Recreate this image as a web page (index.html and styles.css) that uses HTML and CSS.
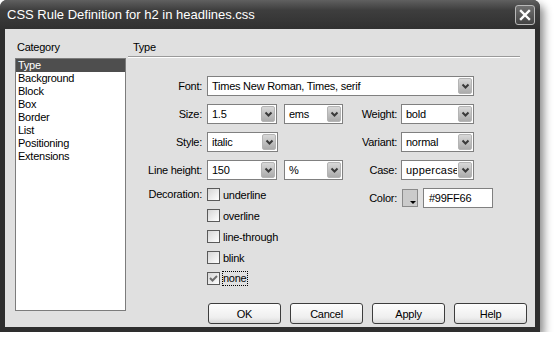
FILE: index.html
```html
<!DOCTYPE html>
<html lang="en">
<head>
  <meta charset="UTF-8" />
  <title>CSS Rule Definition for h2 in headlines.css</title>
  <link rel="stylesheet" href="styles.css">
</head>
<body>
  <div class="window">
    <div class="titlebar">
      <span class="title">CSS Rule Definition for h2 in headlines.css</span>
      <span class="close">
        <svg width="12" height="12" viewBox="0 0 12 12"><path d="M2 2L10 10M10 2L2 10" stroke="#fff" stroke-width="2.4" stroke-linecap="square"/></svg>
      </span>
    </div>
    <div class="client">
      <div class="side">
        <div class="caption">Category</div>
        <ul class="list">
          <li class="selected">Type</li>
          <li>Background</li>
          <li>Block</li>
          <li>Box</li>
          <li>Border</li>
          <li>List</li>
          <li>Positioning</li>
          <li>Extensions</li>
        </ul>
      </div>
      <div class="main">
        <div class="heading">Type</div>
        <div class="form">
          <span class="lbl">Font:</span>
          <div class="combo font"><span class="val">Times New Roman, Times, serif</span><span class="arrow"><svg width="9" height="7" viewBox="0 0 9 7"><path d="M1.5 1.5L4.5 4.5L7.5 1.5" fill="none" stroke="#3a3a3a" stroke-width="2"/></svg></span></div>

          <span class="lbl">Size:</span>
          <div class="combo w70"><span class="val">1.5</span><span class="arrow"><svg width="9" height="7" viewBox="0 0 9 7"><path d="M1.5 1.5L4.5 4.5L7.5 1.5" fill="none" stroke="#3a3a3a" stroke-width="2"/></svg></span></div>
          <div class="combo w59"><span class="val">ems</span><span class="arrow"><svg width="9" height="7" viewBox="0 0 9 7"><path d="M1.5 1.5L4.5 4.5L7.5 1.5" fill="none" stroke="#3a3a3a" stroke-width="2"/></svg></span></div>
          <span class="lbl lbl-right">Weight:</span>
          <div class="combo w73"><span class="val">bold</span><span class="arrow"><svg width="9" height="7" viewBox="0 0 9 7"><path d="M1.5 1.5L4.5 4.5L7.5 1.5" fill="none" stroke="#3a3a3a" stroke-width="2"/></svg></span></div>

          <span class="lbl">Style:</span>
          <div class="combo w71"><span class="val">italic</span><span class="arrow"><svg width="9" height="7" viewBox="0 0 9 7"><path d="M1.5 1.5L4.5 4.5L7.5 1.5" fill="none" stroke="#3a3a3a" stroke-width="2"/></svg></span></div>
          <span class="lbl lbl-right">Variant:</span>
          <div class="combo w73"><span class="val">normal</span><span class="arrow"><svg width="9" height="7" viewBox="0 0 9 7"><path d="M1.5 1.5L4.5 4.5L7.5 1.5" fill="none" stroke="#3a3a3a" stroke-width="2"/></svg></span></div>

          <span class="lbl">Line height:</span>
          <div class="combo w70"><span class="val">150</span><span class="arrow"><svg width="9" height="7" viewBox="0 0 9 7"><path d="M1.5 1.5L4.5 4.5L7.5 1.5" fill="none" stroke="#3a3a3a" stroke-width="2"/></svg></span></div>
          <div class="combo w59"><span class="val">%</span><span class="arrow"><svg width="9" height="7" viewBox="0 0 9 7"><path d="M1.5 1.5L4.5 4.5L7.5 1.5" fill="none" stroke="#3a3a3a" stroke-width="2"/></svg></span></div>
          <span class="lbl lbl-right">Case:</span>
          <div class="combo w73"><span class="val clip">uppercase</span><span class="arrow"><svg width="9" height="7" viewBox="0 0 9 7"><path d="M1.5 1.5L4.5 4.5L7.5 1.5" fill="none" stroke="#3a3a3a" stroke-width="2"/></svg></span></div>

          <span class="lbl top">Decoration:</span>
          <div class="checks">
            <div class="check"><span class="box"></span>underline</div>
            <div class="check"><span class="box"></span>overline</div>
            <div class="check"><span class="box"></span>line-through</div>
            <div class="check"><span class="box"></span>blink</div>
            <div class="check"><span class="box"><svg width="11" height="11" viewBox="0 0 11 11"><path d="M2 5L4.5 7.5L9 3" fill="none" stroke="#6e6e6e" stroke-width="2"/></svg></span><span class="focus">none</span></div>
          </div>
          <span class="lbl lbl-right color-lbl">Color:</span>
          <div class="color">
            <span class="swatch"><span class="tri"></span></span>
            <span class="field">#99FF66</span>
          </div>
        </div>
        <div class="buttons">
          <div class="btn">OK</div>
          <div class="btn">Cancel</div>
          <div class="btn">Apply</div>
          <div class="btn">Help</div>
        </div>
      </div>
    </div>
  </div>
</body>
</html>
```

FILE: styles.css
```css
body {
  margin: 0;
  background: #fff;
  font-family: "Liberation Sans", Arial, sans-serif;
  font-size: 11px;
  letter-spacing: -0.25px;
  color: #000;
}
.window {
  width: 540px;
  height: 332px;
  box-sizing: border-box;
  padding: 0 5px 5px 5px;
  background: #2e2e2e;
  border-radius: 7px 7px 0 0;
  display: flex;
  flex-direction: column;
  box-shadow: 4px 5px 9px rgba(0, 0, 0, 0.45);
}
.titlebar {
  height: 29px;
  margin: 0 -5px;
  padding: 0 5px 0 7px;
  display: flex;
  align-items: center;
  justify-content: space-between;
  background: linear-gradient(#606060, #3e3e3e 35%, #303030);
  border-radius: 7px 7px 0 0;
}
.title {
  color: #fff;
  font-size: 13px;
  letter-spacing: 0;
}
.close {
  width: 20px;
  height: 20px;
  box-sizing: border-box;
  border: 1px solid #b8b8b8;
  border-radius: 3px;
  background: linear-gradient(#707070, #444);
  display: flex;
  align-items: center;
  justify-content: center;
}
.client {
  flex: 1;
  background: #e0e0e0;
  display: flex;
  padding-top: 12px;
}
.side {
  width: 111px;
  margin-left: 10px;
}
.caption {
  line-height: 13px;
  padding-left: 2px;
  margin-bottom: 4px;
}
.list {
  margin: 0;
  padding: 0;
  list-style: none;
  height: 253px;
  box-sizing: border-box;
  border: 1px solid #7c7c7c;
  background: #fff;
}
.list li {
  line-height: 13px;
  padding-left: 2px;
}
.list li.selected {
  background: #4e4e4e;
  color: #fff;
}
.main {
  flex: 1;
  margin-left: 2px;
  display: flex;
  flex-direction: column;
}
.heading {
  line-height: 13px;
  padding: 0 0 2px 5px;
  margin-right: 15px;
  border-bottom: 1px solid #9a9a9a;
  box-shadow: 0 1px 0 #fff;
}
.form {
  margin-top: 19px;
  display: grid;
  grid-template-columns: 79px 77px 59px 58px 1fr;
  row-gap: 8px;
  align-items: center;
}
.lbl {
  grid-column: 1;
  text-align: right;
  padding-right: 5px;
  white-space: nowrap;
}
.lbl-right {
  grid-column: 4;
  padding-right: 4px;
}
.top {
  align-self: start;
  line-height: 13px;
}
.color-lbl {
  align-self: start;
  line-height: 20px;
}
.combo {
  height: 20px;
  box-sizing: border-box;
  border: 1px solid #808080;
  background: #fff;
  display: flex;
}
.combo .val {
  flex: 1;
  overflow: hidden;
  white-space: nowrap;
  line-height: 18px;
  padding-left: 4px;
}
.combo .clip {
  letter-spacing: 0.2px;
}
.combo .arrow {
  width: 14px;
  margin: 1px;
  box-sizing: border-box;
  border: 1px solid #b4b4b4;
  border-radius: 2px;
  background: linear-gradient(#d8d8d8, #ababab);
  display: flex;
  align-items: center;
  justify-content: center;
}
.font {
  grid-column: 2 / 6;
  width: 267px;
}
.w70 { width: 70px; }
.w71 { width: 71px; }
.w59 { width: 59px; }
.w73 { width: 73px; }
.checks {
  grid-column: 2 / 4;
  align-self: start;
  display: flex;
  flex-direction: column;
  gap: 8px;
}
.check {
  height: 13px;
  display: flex;
  align-items: center;
  gap: 3px;
}
.box {
  width: 13px;
  height: 13px;
  box-sizing: border-box;
  border: 1px solid #5a5a5a;
  background: linear-gradient(135deg, #d6d6d6, #fff);
  display: flex;
  align-items: center;
  justify-content: center;
}
.focus {
  outline: 1px dotted #000;
  line-height: 13px;
  padding-right: 1px;
}
.color {
  align-self: start;
  display: flex;
  align-items: center;
  gap: 5px;
}
.swatch {
  width: 16px;
  height: 18px;
  margin-left: 1px;
  box-sizing: border-box;
  border: 1px solid #8a8a8a;
  background: #cbcbcb;
  display: flex;
  align-items: flex-end;
  justify-content: flex-end;
}
.tri {
  width: 0;
  height: 0;
  margin: 0 1px 2px 0;
  border-left: 3px solid transparent;
  border-right: 3px solid transparent;
  border-top: 3px solid #000;
}
.field {
  width: 70px;
  height: 20px;
  box-sizing: border-box;
  border: 1px solid #808080;
  background: #fff;
  line-height: 18px;
  padding-left: 5px;
}
.buttons {
  margin-top: auto;
  margin-right: 8px;
  margin-bottom: 3px;
  display: flex;
  justify-content: flex-end;
  gap: 9px;
}
.btn {
  width: 73px;
  height: 21px;
  box-sizing: border-box;
  border: 1px solid #3d3d3d;
  border-radius: 3px;
  background: linear-gradient(#fdfdfd, #efefef 70%, #d9d9d9);
  display: flex;
  align-items: center;
  justify-content: center;
}
```
